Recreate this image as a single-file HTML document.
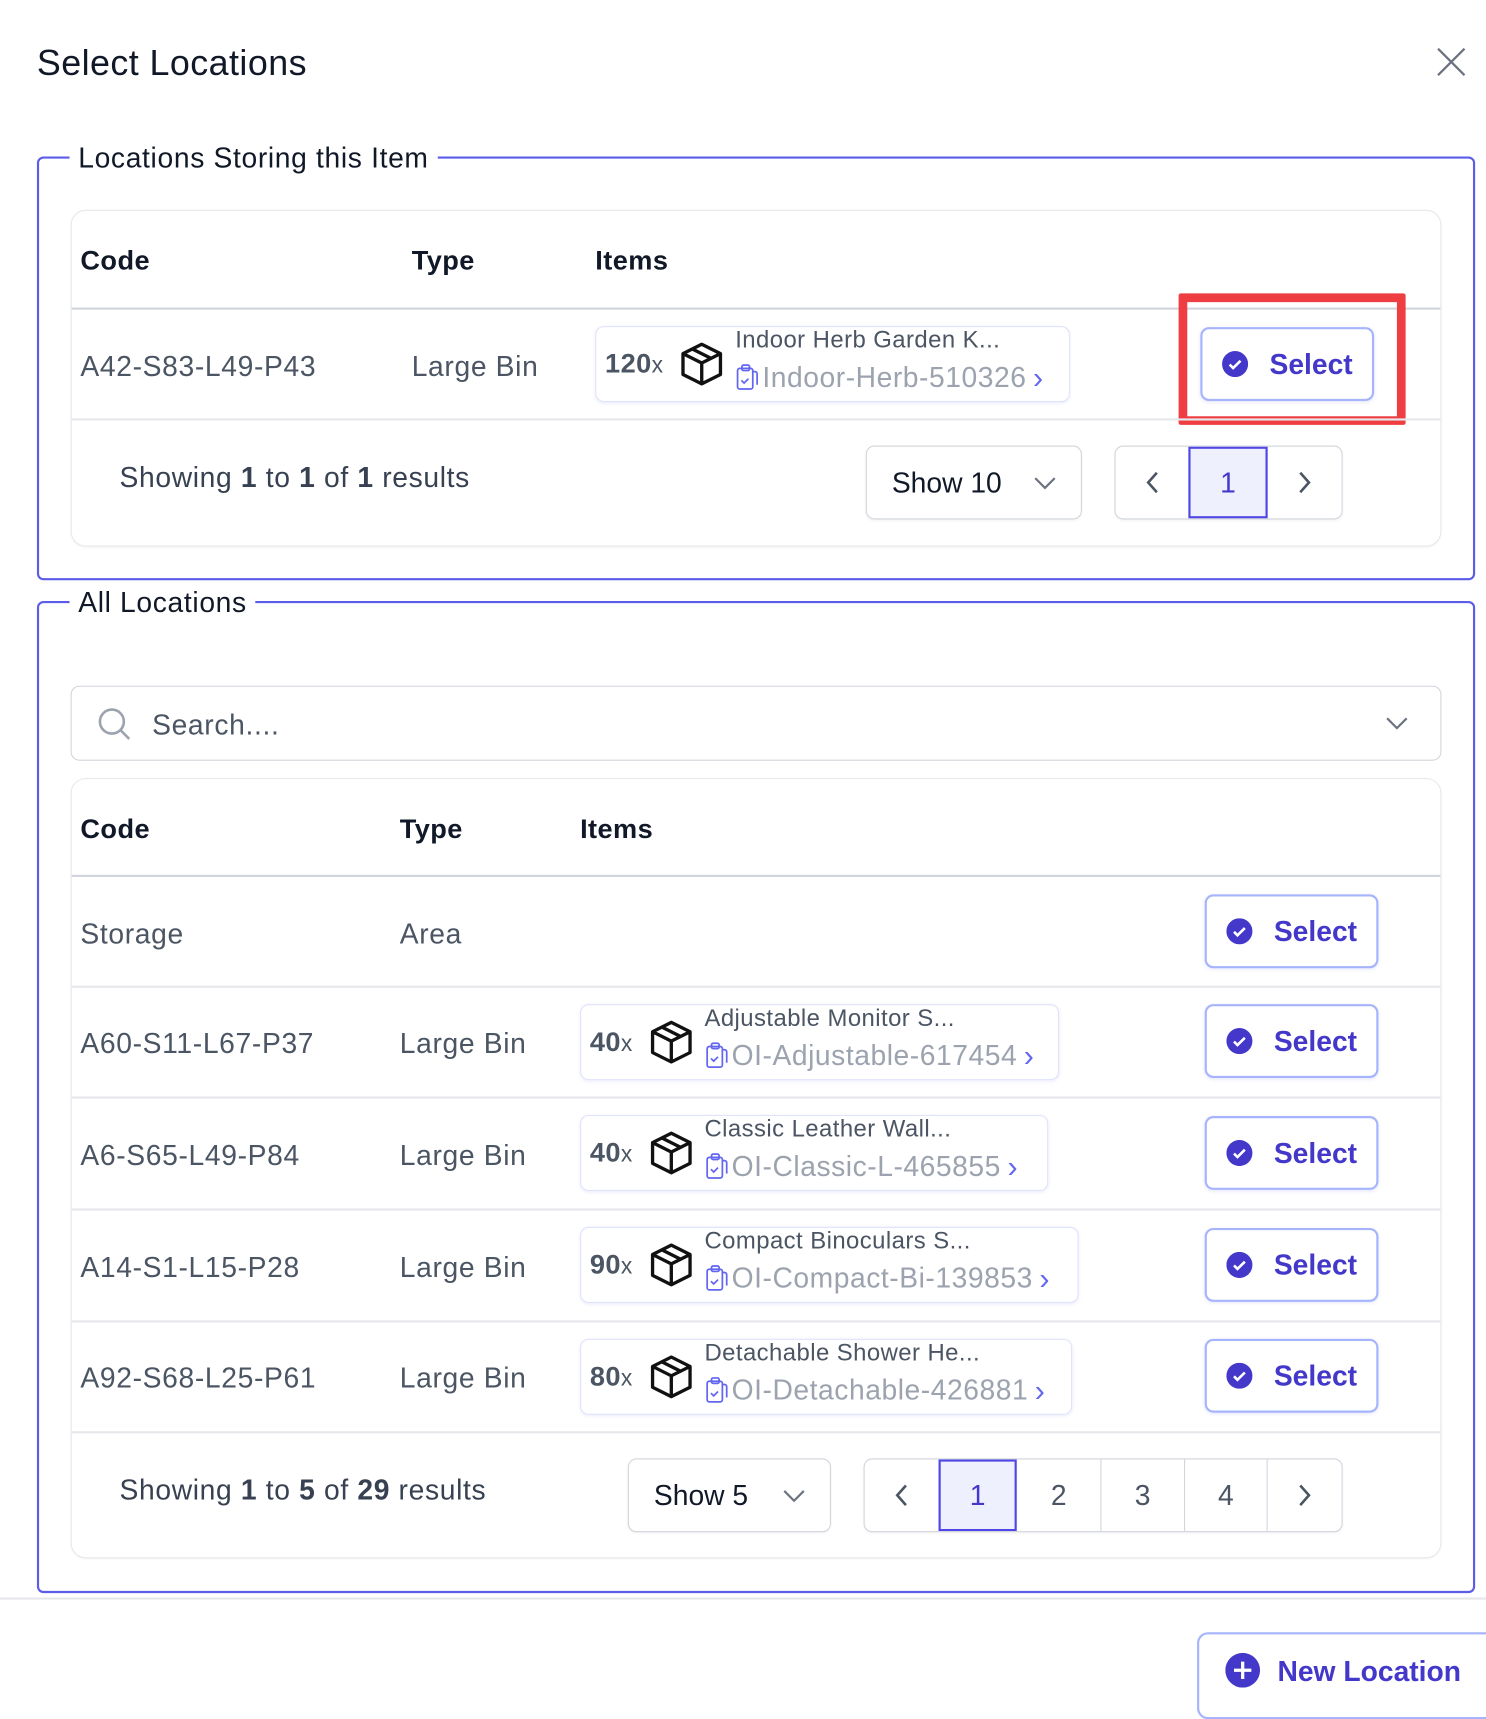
<!DOCTYPE html>
<html><head><meta charset="utf-8">
<style>
*{box-sizing:border-box;margin:0;padding:0}
html,body{width:1486px;height:1704px;overflow:hidden;background:#fff}
#s{position:absolute;left:0;top:0;width:1368px;height:1568px;transform:scale(1.08626,1.0867);transform-origin:0 0;font-family:"Liberation Sans",Arial,sans-serif;color:#4b5563}
.a{position:absolute}
.t{position:absolute;white-space:nowrap;line-height:1}
.fs{position:absolute;border:2px solid #5b5ce8;border-radius:6px}
.lg{position:absolute;background:#fff;padding:0 8px;font-size:26px;letter-spacing:0.6px;color:#111827;line-height:1}
.card{position:absolute;border:1.5px solid #e5e7eb;border-radius:14px;box-shadow:0 1px 2px rgba(0,0,0,.04)}
.hl{position:absolute;height:2px;background:#d1d5db}
.rl{position:absolute;height:1.5px;background:#e5e7eb}
.th{font-size:25px;font-weight:bold;color:#111827;letter-spacing:0.4px}
.td{font-size:26px;color:#4b5563;letter-spacing:0.6px}
.item{position:absolute;height:70px;border:1.5px solid #dfe3fb;border-radius:8px;display:flex;align-items:center;padding-left:8px;box-shadow:0 1px 3px rgba(99,102,241,.12)}
.q{font-size:25px;font-weight:bold;color:#4b5563;letter-spacing:0.4px}
.q small{font-size:21px;font-weight:normal}
.item svg.box{margin:0 8px 0 12px}
.nm{font-size:22px;letter-spacing:0.4px;color:#4b5563;line-height:1;margin-top:-6px}
.sku{font-size:26px;letter-spacing:0.5px;color:#9ca3af;line-height:1;margin-top:8px;display:flex;align-items:center}
.sku svg{margin-right:3px}
.chev{color:#6366f1;font-size:28px;margin-left:6px;margin-top:2px}
.btn{position:absolute;width:160px;height:68px;border:2px solid #a5b4fc;border-radius:8px;display:flex;align-items:center;justify-content:center;font-size:26px;font-weight:bold;color:#4338ca;gap:20px;box-shadow:0 1px 3px rgba(99,102,241,.15)}
.sel{position:absolute;height:68px;border:1.5px solid #d1d5db;border-radius:8px;font-size:26px;color:#111827;display:flex;align-items:center;padding-left:23px;box-shadow:0 1px 2px rgba(0,0,0,.05)}
.pg{position:absolute;height:68px;border:1.5px solid #d1d5db;border-radius:8px;display:flex;overflow:hidden;box-shadow:0 1px 2px rgba(0,0,0,.05)}
.pg div{height:100%;display:flex;align-items:center;justify-content:center;font-size:26px;color:#4b5563;border-left:1.5px solid #d1d5db}
.pg div:first-child{border-left:none}
.pg .on{background:#eef0fe;border:2px solid #4f46e5;color:#4338ca}
</style></head><body><div id="s">

<div class="t" style="left:34px;top:41px;font-size:33px;letter-spacing:0.4px;color:#111827">Select Locations</div>
<svg class="a" style="left:1321px;top:42px" width="30" height="30" viewBox="0 0 32 32"><path d="M3 3L29 29M29 3L3 29" stroke="#6b7280" stroke-width="2.2" fill="none"/></svg>

<div class="fs" style="left:34px;top:144px;width:1324px;height:390px"></div>
<div class="lg" style="left:64px;top:132px">Locations Storing this Item</div>
<div class="card" style="left:65px;top:193px;width:1262px;height:310px"></div>
<div class="t th" style="left:74px;top:228px">Code</div>
<div class="t th" style="left:379px;top:228px">Type</div>
<div class="t th" style="left:548px;top:228px">Items</div>
<div class="hl" style="left:66px;top:283px;width:1260px"></div>
<div class="t td" style="left:74px;top:324px">A42-S83-L49-P43</div>
<div class="t td" style="left:379px;top:324px">Large Bin</div>
<div class="item" style="left:548px;top:300px;width:437px">
 <div class="q">120<small>x</small></div>
 <svg class="box" width="46" height="46" viewBox="0 0 24 24" fill="none" stroke="#111" stroke-width="1.6" stroke-linejoin="round"><path d="M12 2.5L21 7v10l-9 4.5L3 17V7z"/><path d="M3 7l9 4.5L21 7M12 11.5v10M7.5 4.8l9 4.5"/></svg>
 <div><div class="nm">Indoor Herb Garden K...</div><div class="sku"><svg width="22" height="26" viewBox="0 0 22 26" fill="none" stroke="#6366f1" stroke-width="1.6"><rect x="2" y="5" width="14" height="19" rx="2"/><rect x="6" y="2" width="7" height="5" rx="1.5"/><path d="M16 8h2a2 2 0 0 1 2 2v10"/><path d="M5.5 16l2.5 2.5 4-4"/></svg>Indoor-Herb-510326<span class="chev">&#8250;</span></div></div>
</div>
<div class="btn" style="left:1105px;top:301px"><svg width="24" height="24" viewBox="0 0 24 24"><circle cx="12" cy="12" r="12" fill="#4338ca"/><path d="M7 12.5l3.2 3.2L17 9" stroke="#fff" stroke-width="2.4" fill="none"/></svg>Select</div>
<div class="a" style="left:1085px;top:270px;width:209px;height:121px;border:8px solid #ef3e42;border-radius:2px"></div>
<div class="rl" style="left:66px;top:385px;width:1260px"></div>
<div class="t td" style="left:110px;top:426px;color:#374151">Showing <b>1</b> to <b>1</b> of <b>1</b> results</div>
<div class="sel" style="left:797px;top:410px;width:199px">Show 10<svg class="a" style="left:153px;top:27px" width="22" height="14" viewBox="0 0 22 14"><path d="M2 2l9 9 9-9" stroke="#6b7280" stroke-width="2" fill="none"/></svg></div>
<div class="pg" style="left:1026px;top:410px;width:210px">
 <div style="width:68px"><svg width="14" height="22" viewBox="0 0 14 22"><path d="M11 2L3 11l8 9" stroke="#4b5563" stroke-width="2.4" fill="none"/></svg></div>
 <div class="on" style="width:73px">1</div>
 <div style="width:69px;border-left:none"><svg width="14" height="22" viewBox="0 0 14 22"><path d="M3 2l8 9-8 9" stroke="#4b5563" stroke-width="2.4" fill="none"/></svg></div>
</div>

<div class="fs" style="left:34px;top:553px;width:1324px;height:913px"></div>
<div class="lg" style="left:64px;top:541px">All Locations</div>
<div class="a" style="left:65px;top:631px;width:1262px;height:69px;border:1.5px solid #d1d5db;border-radius:8px"></div>
<svg class="a" style="left:88px;top:649px" width="34" height="34" viewBox="0 0 34 34"><circle cx="15" cy="15" r="11" stroke="#9ca3af" stroke-width="2.4" fill="none"/><path d="M23 23l8 8" stroke="#9ca3af" stroke-width="2.4"/></svg>
<div class="t td" style="left:140px;top:654px">Search....</div>
<svg class="a" style="left:1275px;top:659px" width="22" height="14" viewBox="0 0 22 14"><path d="M2 2l9 9 9-9" stroke="#6b7280" stroke-width="2" fill="none"/></svg>

<div class="card" style="left:65px;top:716px;width:1262px;height:718px"></div>
<div class="t th" style="left:74px;top:751px">Code</div>
<div class="t th" style="left:368px;top:751px">Type</div>
<div class="t th" style="left:534px;top:751px">Items</div>
<div class="hl" style="left:66px;top:805px;width:1260px"></div>

<div class="t td" style="left:74px;top:846px">Storage</div>
<div class="t td" style="left:368px;top:846px">Area</div>
<div class="btn" style="left:1109px;top:823px"><svg width="24" height="24" viewBox="0 0 24 24"><circle cx="12" cy="12" r="12" fill="#4338ca"/><path d="M7 12.5l3.2 3.2L17 9" stroke="#fff" stroke-width="2.4" fill="none"/></svg>Select</div>
<div class="rl" style="left:66px;top:907px;width:1260px"></div>

<div class="t td" style="left:74px;top:947px">A60-S11-L67-P37</div>
<div class="t td" style="left:368px;top:947px">Large Bin</div>
<div class="item" style="left:534px;top:924px;width:441px">
 <div class="q">40<small>x</small></div>
 <svg class="box" width="46" height="46" viewBox="0 0 24 24" fill="none" stroke="#111" stroke-width="1.6" stroke-linejoin="round"><path d="M12 2.5L21 7v10l-9 4.5L3 17V7z"/><path d="M3 7l9 4.5L21 7M12 11.5v10M7.5 4.8l9 4.5"/></svg>
 <div><div class="nm">Adjustable Monitor S...</div><div class="sku"><svg width="22" height="26" viewBox="0 0 22 26" fill="none" stroke="#6366f1" stroke-width="1.6"><rect x="2" y="5" width="14" height="19" rx="2"/><rect x="6" y="2" width="7" height="5" rx="1.5"/><path d="M16 8h2a2 2 0 0 1 2 2v10"/><path d="M5.5 16l2.5 2.5 4-4"/></svg>OI-Adjustable-617454<span class="chev">&#8250;</span></div></div>
</div>
<div class="btn" style="left:1109px;top:924px"><svg width="24" height="24" viewBox="0 0 24 24"><circle cx="12" cy="12" r="12" fill="#4338ca"/><path d="M7 12.5l3.2 3.2L17 9" stroke="#fff" stroke-width="2.4" fill="none"/></svg>Select</div>
<div class="rl" style="left:66px;top:1009px;width:1260px"></div>

<div class="t td" style="left:74px;top:1050px">A6-S65-L49-P84</div>
<div class="t td" style="left:368px;top:1050px">Large Bin</div>
<div class="item" style="left:534px;top:1026px;width:431px">
 <div class="q">40<small>x</small></div>
 <svg class="box" width="46" height="46" viewBox="0 0 24 24" fill="none" stroke="#111" stroke-width="1.6" stroke-linejoin="round"><path d="M12 2.5L21 7v10l-9 4.5L3 17V7z"/><path d="M3 7l9 4.5L21 7M12 11.5v10M7.5 4.8l9 4.5"/></svg>
 <div><div class="nm">Classic Leather Wall...</div><div class="sku"><svg width="22" height="26" viewBox="0 0 22 26" fill="none" stroke="#6366f1" stroke-width="1.6"><rect x="2" y="5" width="14" height="19" rx="2"/><rect x="6" y="2" width="7" height="5" rx="1.5"/><path d="M16 8h2a2 2 0 0 1 2 2v10"/><path d="M5.5 16l2.5 2.5 4-4"/></svg>OI-Classic-L-465855<span class="chev">&#8250;</span></div></div>
</div>
<div class="btn" style="left:1109px;top:1027px"><svg width="24" height="24" viewBox="0 0 24 24"><circle cx="12" cy="12" r="12" fill="#4338ca"/><path d="M7 12.5l3.2 3.2L17 9" stroke="#fff" stroke-width="2.4" fill="none"/></svg>Select</div>
<div class="rl" style="left:66px;top:1112px;width:1260px"></div>

<div class="t td" style="left:74px;top:1153px">A14-S1-L15-P28</div>
<div class="t td" style="left:368px;top:1153px">Large Bin</div>
<div class="item" style="left:534px;top:1129px;width:459px">
 <div class="q">90<small>x</small></div>
 <svg class="box" width="46" height="46" viewBox="0 0 24 24" fill="none" stroke="#111" stroke-width="1.6" stroke-linejoin="round"><path d="M12 2.5L21 7v10l-9 4.5L3 17V7z"/><path d="M3 7l9 4.5L21 7M12 11.5v10M7.5 4.8l9 4.5"/></svg>
 <div><div class="nm">Compact Binoculars S...</div><div class="sku"><svg width="22" height="26" viewBox="0 0 22 26" fill="none" stroke="#6366f1" stroke-width="1.6"><rect x="2" y="5" width="14" height="19" rx="2"/><rect x="6" y="2" width="7" height="5" rx="1.5"/><path d="M16 8h2a2 2 0 0 1 2 2v10"/><path d="M5.5 16l2.5 2.5 4-4"/></svg>OI-Compact-Bi-139853<span class="chev">&#8250;</span></div></div>
</div>
<div class="btn" style="left:1109px;top:1130px"><svg width="24" height="24" viewBox="0 0 24 24"><circle cx="12" cy="12" r="12" fill="#4338ca"/><path d="M7 12.5l3.2 3.2L17 9" stroke="#fff" stroke-width="2.4" fill="none"/></svg>Select</div>
<div class="rl" style="left:66px;top:1215px;width:1260px"></div>

<div class="t td" style="left:74px;top:1255px">A92-S68-L25-P61</div>
<div class="t td" style="left:368px;top:1255px">Large Bin</div>
<div class="item" style="left:534px;top:1232px;width:453px">
 <div class="q">80<small>x</small></div>
 <svg class="box" width="46" height="46" viewBox="0 0 24 24" fill="none" stroke="#111" stroke-width="1.6" stroke-linejoin="round"><path d="M12 2.5L21 7v10l-9 4.5L3 17V7z"/><path d="M3 7l9 4.5L21 7M12 11.5v10M7.5 4.8l9 4.5"/></svg>
 <div><div class="nm">Detachable Shower He...</div><div class="sku"><svg width="22" height="26" viewBox="0 0 22 26" fill="none" stroke="#6366f1" stroke-width="1.6"><rect x="2" y="5" width="14" height="19" rx="2"/><rect x="6" y="2" width="7" height="5" rx="1.5"/><path d="M16 8h2a2 2 0 0 1 2 2v10"/><path d="M5.5 16l2.5 2.5 4-4"/></svg>OI-Detachable-426881<span class="chev">&#8250;</span></div></div>
</div>
<div class="btn" style="left:1109px;top:1232px"><svg width="24" height="24" viewBox="0 0 24 24"><circle cx="12" cy="12" r="12" fill="#4338ca"/><path d="M7 12.5l3.2 3.2L17 9" stroke="#fff" stroke-width="2.4" fill="none"/></svg>Select</div>
<div class="rl" style="left:66px;top:1317px;width:1260px"></div>

<div class="t td" style="left:110px;top:1358px;color:#374151">Showing <b>1</b> to <b>5</b> of <b>29</b> results</div>
<div class="sel" style="left:578px;top:1342px;width:187px">Show 5<svg class="a" style="left:141px;top:27px" width="22" height="14" viewBox="0 0 22 14"><path d="M2 2l9 9 9-9" stroke="#6b7280" stroke-width="2" fill="none"/></svg></div>
<div class="pg" style="left:795px;top:1342px;width:441px">
 <div style="width:68px"><svg width="14" height="22" viewBox="0 0 14 22"><path d="M11 2L3 11l8 9" stroke="#4b5563" stroke-width="2.4" fill="none"/></svg></div>
 <div class="on" style="width:73px">1</div>
 <div style="width:77px;border-left:none">2</div>
 <div style="width:77px">3</div>
 <div style="width:77px">4</div>
 <div style="width:69px"><svg width="14" height="22" viewBox="0 0 14 22"><path d="M3 2l8 9-8 9" stroke="#4b5563" stroke-width="2.4" fill="none"/></svg></div>
</div>

<div class="a" style="left:0;top:1470px;width:1368px;height:1.5px;background:#e5e7eb"></div>
<div class="a" style="left:1102px;top:1502px;width:290px;height:80px;border:2px solid #a5b4fc;border-radius:10px"></div>
<svg class="a" style="left:1128px;top:1521px" width="32" height="32" viewBox="0 0 32 32"><circle cx="16" cy="16" r="16" fill="#4338ca"/><path d="M16 8v16M8 16h16" stroke="#fff" stroke-width="3"/></svg>
<div class="t" style="left:1176px;top:1525px;font-size:26px;font-weight:bold;color:#4338ca">New Location</div>

</div></body></html>
